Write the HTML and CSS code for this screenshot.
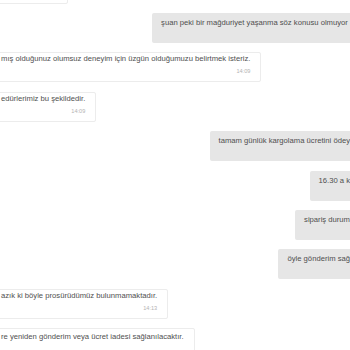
FILE: index.html
```html
<!DOCTYPE html>
<html lang="tr">
<head>
<meta charset="utf-8">
<link rel="stylesheet" href="styles.css">
</head>
<body>
<div class="chat">
  <div class="row in"><div class="bubble white stub"></div></div>
  <div class="row out"><div class="bubble gray"><div class="text">şuan peki bir mağduriyet yaşanma söz konusu olmuyor&nbsp;</div></div></div>
  <div class="row in"><div class="bubble white"><div class="text">mış olduğunuz olumsuz deneyim için üzgün olduğumuzu belirtmek isteriz.</div><div class="time">14:09</div></div></div>
  <div class="row in"><div class="bubble white"><div class="text">edürlerimiz bu şekildedir.</div><div class="time">14:09</div></div></div>
  <div class="row out"><div class="bubble gray"><div class="text">tamam günlük kargolama ücretini ödey</div></div></div>
  <div class="row out"><div class="bubble gray"><div class="text">16.30 a k</div></div></div>
  <div class="row out"><div class="bubble gray"><div class="text">sipariş durum</div></div></div>
  <div class="row out"><div class="bubble gray"><div class="text">öyle gönderim sağ</div></div></div>
  <div class="row in"><div class="bubble white"><div class="text">azık ki böyle prosürüdümüz bulunmamaktadır.</div><div class="time">14:13</div></div></div>
  <div class="row in"><div class="bubble white last"><div class="text">re yeniden gönderim veya ücret iadesi sağlanılacaktır.</div></div></div>
</div>
</body>
</html>
```

FILE: styles.css
```css
html, body {
  margin: 0;
  padding: 0;
  background: #ffffff;
  overflow: hidden;
  width: 350px;
  height: 350px;
}

.chat {
  display: flex;
  flex-direction: column;
  gap: 9.375px;
  margin-top: -26.375px;
  font-family: "Liberation Sans", Arial, sans-serif;
  color: #4f4f4f;
}

.row {
  display: flex;
  white-space: nowrap;
}

.row.in {
  justify-content: flex-start;
  margin-left: -10px;
}

.row.out {
  justify-content: flex-end;
  margin-right: -9px;
}

.bubble {
  box-sizing: border-box;
  height: 30px;
  border-radius: 2px;
  flex: none;
}

.bubble.white {
  background: #ffffff;
  border: 1px solid #ececec;
  padding: 1px 10px 0 10px;
}

.bubble.stub {
  width: 78px;
}

.bubble.white.last {
  padding-top: 3px;
}

.bubble.gray {
  background: #e6e6e6;
  padding: 4px 9px 0 9px;
}

.text {
  font-size: 7.66px;
  line-height: 10px;
}

.bubble.gray .text {
  line-height: 11px;
}

.time {
  font-size: 5.6px;
  line-height: 9px;
  margin-top: 3px;
  text-align: right;
  color: #b3b3b3;
}
```
